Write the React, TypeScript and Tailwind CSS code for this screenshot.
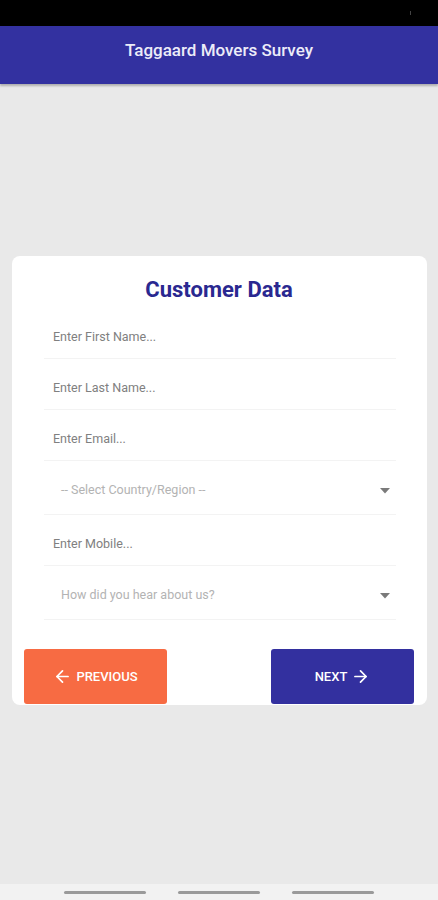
import { ArrowLeft, ArrowRight } from "lucide-react";

const font = { fontFamily: "Roboto, 'Noto Sans', sans-serif" };

function TextRow({ label }: { label: string }) {
  return (
    <div className="flex h-[51px] items-center border-b border-[#f3f3f3] pt-[9px] pl-[9px]">
      <span className="text-[12.5px] text-[#808080]">{label}</span>
    </div>
  );
}

function SelectRow({ label }: { label: string }) {
  return (
    <div className="flex h-[54px] items-center justify-between border-b border-[#f3f3f3] pt-[6px] pl-[17px] pr-[6px]">
      <span className="text-[12.5px] text-[#b3b3b3]">{label}</span>
      <svg width="10" height="6" viewBox="0 0 10 6">
        <path d="M0 0 L10 0 L5 5.5 Z" fill="#7a7a7a" />
      </svg>
    </div>
  );
}

export default function App() {
  return (
    <div style={font} className="flex h-[900px] w-full flex-col bg-[#e9e9e9]">
      {/* status bar */}
      <div className="flex h-[26px] shrink-0 items-center justify-end bg-black pr-[27px]">
        <div className="h-[4px] w-[1px] bg-[#444]" />
      </div>

      {/* app bar */}
      <div className="flex h-[58px] shrink-0 items-center justify-center bg-[#3331a0] shadow-[0_2px_2px_rgba(0,0,0,0.25)]">
        <h1 className="pb-[8px] text-[17px] font-medium text-[#ececf8]">
          Taggaard Movers Survey
        </h1>
      </div>

      <div className="flex-1 pl-3 pr-[11px] pt-[172px]">
        <div className="rounded-lg bg-white pb-px pl-3 pr-[13px] pt-5">
          <h2 className="mb-1 text-center text-[22px] font-bold leading-[28px] text-[#2a2890]">
            Customer Data
          </h2>

          <div className="pl-5 pr-[18px]">
            <TextRow label="Enter First Name..." />
            <TextRow label="Enter Last Name..." />
            <TextRow label="Enter Email..." />
            <SelectRow label="-- Select Country/Region --" />
            <TextRow label="Enter Mobile..." />
            <SelectRow label="How did you hear about us?" />
          </div>

          <div className="mt-[29px] flex justify-between">
            <button className="flex h-[55px] w-[143px] items-center justify-center gap-[4px] rounded-[3px] bg-[#f76b43] text-[13px] font-medium text-white">
              <ArrowLeft size={19} strokeWidth={2.2} />
              PREVIOUS
            </button>
            <button className="flex h-[55px] w-[143px] items-center justify-center gap-[4px] rounded-[3px] bg-[#33309f] text-[13px] font-medium text-white">
              NEXT
              <ArrowRight size={19} strokeWidth={2.2} />
            </button>
          </div>
        </div>
      </div>

      {/* nav bar */}
      <div className="flex h-[16px] shrink-0 items-center justify-center gap-[32px] bg-[#f2f2f2]">
        <div className="h-[3px] w-[82px] rounded-full bg-[#9a9a9a]" />
        <div className="h-[3px] w-[82px] rounded-full bg-[#9a9a9a]" />
        <div className="h-[3px] w-[82px] rounded-full bg-[#9a9a9a]" />
      </div>
    </div>
  );
}
